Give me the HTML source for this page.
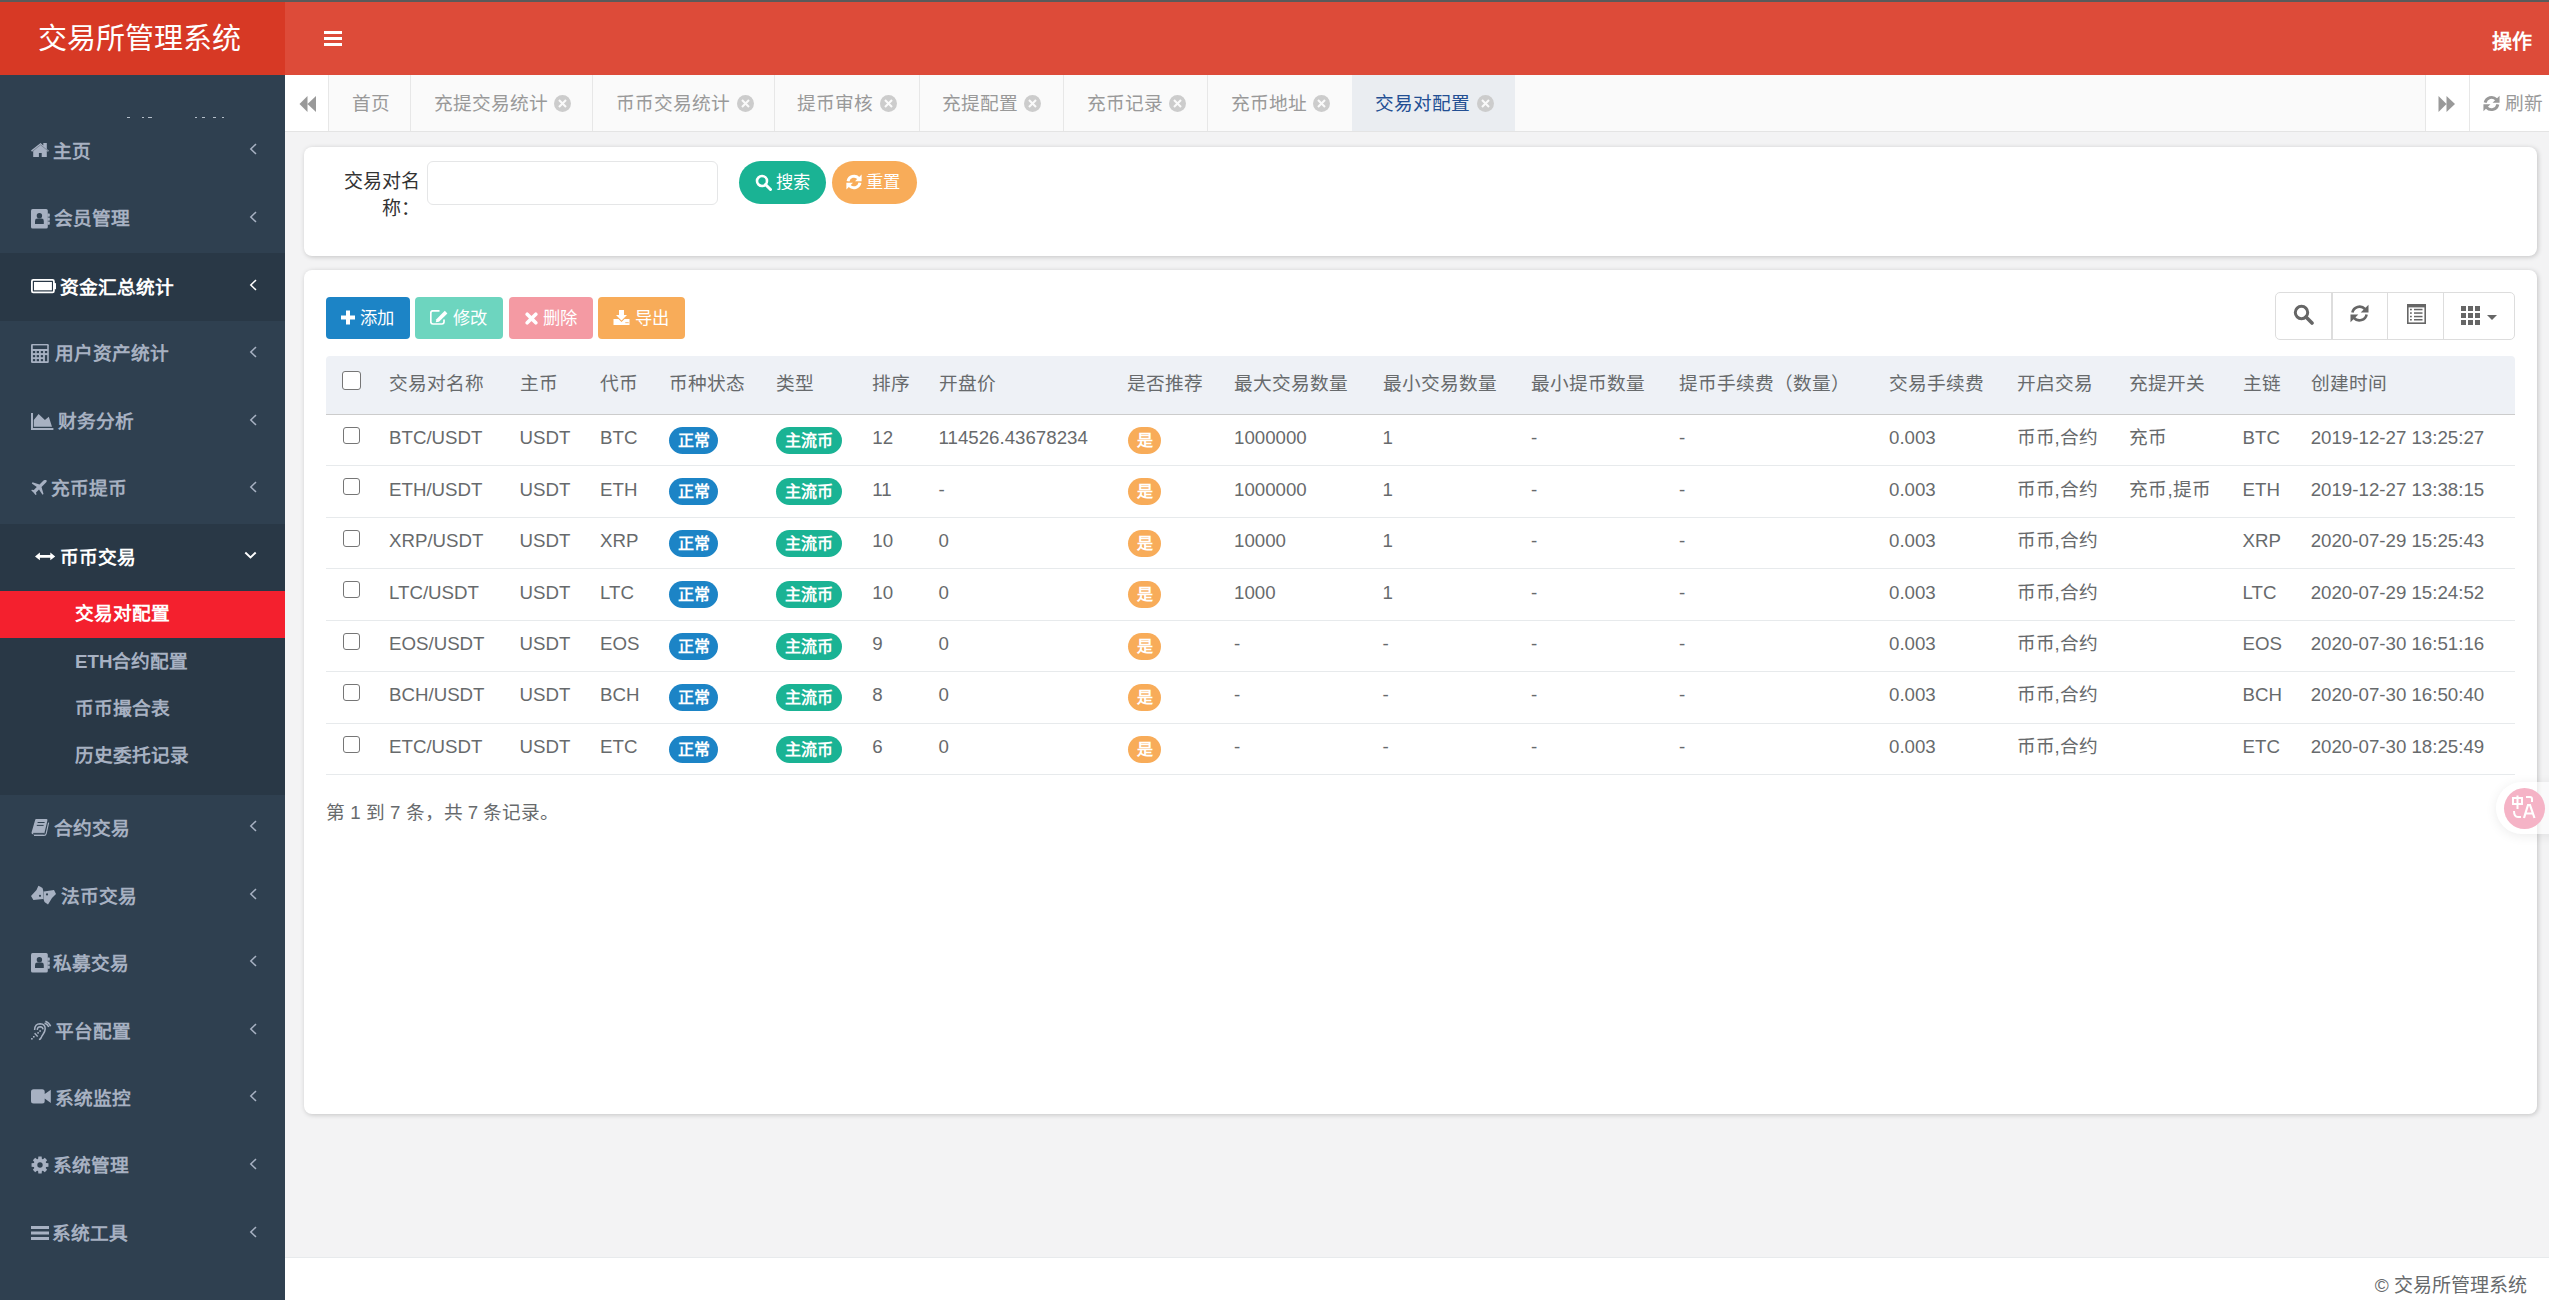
<!DOCTYPE html><html lang="zh-CN"><head><meta charset="utf-8"><style>
*{box-sizing:border-box;margin:0;padding:0}
html,body{width:2549px;height:1300px;overflow:hidden}
body{position:relative;background:#f3f3f4;font-family:"Liberation Sans",sans-serif;color:#676a6c}
.a{position:absolute}
#topline{left:0;top:0;width:2549px;height:2px;background:#5a5a5a}
#logo{left:0;top:2px;width:285px;height:73px;background:#d73925;color:#fff;font-size:29px;line-height:73px;padding-left:38px;padding-top:1px;white-space:nowrap}
#navbar{left:285px;top:2px;width:2264px;height:73px;background:#dd4b39}
#side{left:0;top:75px;width:285px;height:1225px;background:#2f4050;overflow:hidden}
.mi{position:absolute;left:0;width:285px;height:40px;color:#a7b1c2;font-weight:bold;font-size:18.7px;line-height:40px;white-space:nowrap}
.mi .ic{position:absolute;left:31px;top:0;height:40px;display:flex;align-items:center}
.mi .tx{position:absolute;top:0}
.mi .ch{position:absolute;left:249px;top:11.6px}
.mi.w{color:#fff}
.sub{position:absolute;left:75px;height:40px;line-height:40px;color:#a7b1c2;font-weight:bold;font-size:18.7px;white-space:nowrap}
.tabbar{left:285px;top:75px;width:2264px;height:57px;background:#fafafa;border-bottom:1px solid #e4e4e4}
.tab{position:absolute;top:0;height:56px;border-right:1px solid #e7e7e7}
.tt{position:absolute;top:0;line-height:56px;font-size:18.7px;color:#999;white-space:nowrap}
.card{background:#fff;border-radius:8px;box-shadow:1px 1px 5px rgba(0,0,0,.2)}
svg{display:block}
</style></head><body>
<div id="topline" class="a"></div>
<div id="logo" class="a">交易所管理系统</div>
<div id="navbar" class="a"></div>
<svg class="a" style="left:324px;top:31px" width="18" height="16"><rect x="0" y="0" width="18" height="3" fill="#fff"/><rect x="0" y="6" width="18" height="3" fill="#fff"/><rect x="0" y="12" width="18" height="3" fill="#fff"/></svg>
<div class="a" style="left:2492px;top:29px;font-size:20px;font-weight:bold;color:#fff;line-height:26px">操作</div>
<div id="side" class="a">
<div class="a" style="left:0;top:178px;width:285px;height:68px;background:#293846"></div>
<div class="a" style="left:0;top:449px;width:285px;height:271px;background:#293846"></div>
<div class="a" style="left:0;top:516px;width:285px;height:47px;background:#f4202e"></div>
<div class="a" style="left:0;top:42px;width:285px;height:2px">
<div class="a" style="left:127px;top:0;width:3px;height:1px;background:rgba(215,222,232,.8)"></div>
<div class="a" style="left:142px;top:0;width:2px;height:1px;background:rgba(215,222,232,.8)"></div>
<div class="a" style="left:148px;top:0;width:4px;height:1px;background:rgba(215,222,232,.8)"></div>
<div class="a" style="left:195px;top:0;width:2px;height:1px;background:rgba(215,222,232,.8)"></div>
<div class="a" style="left:202px;top:0;width:3px;height:1px;background:rgba(215,222,232,.8)"></div>
<div class="a" style="left:213px;top:0;width:3px;height:1px;background:rgba(215,222,232,.8)"></div>
<div class="a" style="left:222px;top:0;width:2px;height:1px;background:rgba(215,222,232,.8)"></div>
</div>
<div class="mi" style="top:56.9px"><div class="ic" style="left:31px;top:-1.5px"><svg width="19" height="16" viewBox="0 0 19 16"><path d="M9.6 0.9 L0 8.6 L1 9.8 L2.2 8.9 L2.2 15 L7.9 15 L7.9 11 L10.7 11 L10.7 15 L15.8 15 L15.8 8.9 L17 9.8 L18 8.7 L15.8 6.9 L15.8 0.9 L12.3 0.9 L12.3 3.6 Z" fill="#a7b1c2"/><path d="M1.6 9.2 L9.6 2.9 L17.4 9.2" fill="none" stroke="#2f4050" stroke-width="0.7" stroke-opacity="0.55"/></svg></div><div class="tx" style="left:53.3px">主页</div><div class="ch" style=""><svg width="9" height="13" viewBox="0 0 9 13"><path d="M7 1 L1.8 6 L7 11" fill="none" stroke="#a7b1c2" stroke-width="1.5"/></svg></div></div>
<div class="mi" style="top:124.2px"><div class="ic" style="left:31px;top:-0.6px"><svg width="19" height="20" viewBox="0 0 19 20"><rect x="0" y="0.1" width="16.8" height="19.4" rx="1.6" fill="#a7b1c2"/><rect x="16.4" y="4.5" width="2.4" height="3.2" rx="0.6" fill="#a7b1c2"/><rect x="16.4" y="8.5" width="2.4" height="3.2" rx="0.6" fill="#a7b1c2"/><rect x="16.4" y="12.5" width="2.4" height="3.2" rx="0.6" fill="#a7b1c2"/><circle cx="8.4" cy="6.7" r="2.7" fill="#2f4050"/><path d="M4 15.1 L4 11.9 Q4 9.6 6.3 9.6 L10.5 9.6 Q12.8 9.6 12.8 11.9 L12.8 15.1 Z" fill="#2f4050"/></svg></div><div class="tx" style="left:53.6px">会员管理</div><div class="ch" style=""><svg width="9" height="13" viewBox="0 0 9 13"><path d="M7 1 L1.8 6 L7 11" fill="none" stroke="#a7b1c2" stroke-width="1.5"/></svg></div></div>
<div class="mi w" style="top:192.5px"><div class="ic" style="left:31px;top:-1.1px"><svg width="26" height="15" viewBox="0 0 26 15"><rect x="0.9" y="0.9" width="22" height="12.4" rx="1.3" fill="none" stroke="#fff" stroke-width="1.8"/><rect x="3" y="3" width="17.9" height="8.3" fill="#fff"/><rect x="22.8" y="4" width="2.2" height="6.3" rx="0.6" fill="#fff"/></svg></div><div class="tx" style="left:60.0px">资金汇总统计</div><div class="ch" style=""><svg width="9" height="13" viewBox="0 0 9 13"><path d="M7 1 L1.8 6 L7 11" fill="none" stroke="#fff" stroke-width="1.5"/></svg></div></div>
<div class="mi" style="top:259.0px"><div class="ic" style="left:31px;top:-0.5px"><svg width="18" height="19" viewBox="0 0 18 19"><rect x="0" y="0" width="17.8" height="19" rx="1.2" fill="#a7b1c2"/><g fill="#2f4050"><rect x="1.8" y="1.4" width="14.4" height="3.6"/><rect x="1.9" y="7" width="2.3" height="2.1"/><rect x="1.9" y="11.1" width="2.3" height="2.1"/><rect x="1.9" y="15.1" width="2.3" height="2.1"/><rect x="5.7" y="7" width="2.3" height="2.1"/><rect x="5.7" y="11.1" width="2.3" height="2.1"/><rect x="5.7" y="15.1" width="2.3" height="2.1"/><rect x="9.8" y="7" width="2.3" height="2.1"/><rect x="9.8" y="11.1" width="2.3" height="2.1"/><rect x="9.8" y="15.1" width="2.3" height="2.1"/><rect x="13.9" y="7" width="2.3" height="2.1"/><rect x="13.9" y="11.1" width="2.3" height="6.1"/></g></svg></div><div class="tx" style="left:54.8px">用户资产统计</div><div class="ch" style=""><svg width="9" height="13" viewBox="0 0 9 13"><path d="M7 1 L1.8 6 L7 11" fill="none" stroke="#a7b1c2" stroke-width="1.5"/></svg></div></div>
<div class="mi" style="top:327.0px"><div class="ic" style="left:31px;top:-1.5px"><svg width="23" height="18" viewBox="0 0 23 18"><path d="M1 0.9 L1 16.9 L22.4 16.9" fill="none" stroke="#a7b1c2" stroke-width="2"/><path d="M2.8 14.7 L2.8 8 L7.6 2.1 L13.9 8 L17.8 4.8 L21 14.7 Z" fill="#a7b1c2"/></svg></div><div class="tx" style="left:57.5px">财务分析</div><div class="ch" style=""><svg width="9" height="13" viewBox="0 0 9 13"><path d="M7 1 L1.8 6 L7 11" fill="none" stroke="#a7b1c2" stroke-width="1.5"/></svg></div></div>
<div class="mi" style="top:394.0px"><div class="ic" style="left:31px;top:-1px"><svg width="17" height="16" viewBox="0 0 17 16"><path d="M15.5 0.3 Q16.3 1.5 14.5 3 L10.5 7 L12.5 14 L11.5 14.8 L8 9.5 L5 12.5 L5.5 14.5 L4.5 15 L2.5 12.5 L0.3 10.5 L0.8 9.8 L2.8 10 L5.8 7 L0.8 3.5 L1.5 2.3 L8.5 4.5 L12.5 0.5 Q14 -0.5 15.5 0.3 Z" fill="#a7b1c2"/></svg></div><div class="tx" style="left:51.0px">充币提币</div><div class="ch" style=""><svg width="9" height="13" viewBox="0 0 9 13"><path d="M7 1 L1.8 6 L7 11" fill="none" stroke="#a7b1c2" stroke-width="1.5"/></svg></div></div>
<div class="mi w" style="top:463.1px"><div class="ic" style="left:35px;top:-1.6px"><svg width="21" height="9" viewBox="0 0 21 9"><path d="M0 4.4 L4.9 0.5 L4.9 3.1 L15.3 3.1 L15.3 0.5 L20.2 4.4 L15.3 8.3 L15.3 5.7 L4.9 5.7 L4.9 8.3 Z" fill="#fff"/></svg></div><div class="tx" style="left:59.8px">币币交易</div><div class="ch" style="left:244px;top:13px"><svg width="13" height="9" viewBox="0 0 13 9"><path d="M1.3 1.5 L6.5 6.5 L11.7 1.5" fill="none" stroke="#fff" stroke-width="1.9"/></svg></div></div>
<div class="mi" style="top:733.7px"><div class="ic" style="left:28px;top:-3.7px"><svg width="22" height="22" viewBox="0 0 22 22"><path d="M8 5 L18.4 5 Q19.7 5 19.4 6.4 L16.5 18.8 Q16.2 20.3 15 20.3 L5.6 20.3 Q3.2 20.3 3.6 18.3 L7.3 5.6 Q7.5 5 8 5 Z" fill="#a7b1c2"/><path d="M5.2 19.4 L16 19.4" stroke="#2f4050" stroke-width="1"/><path d="M9.6 8.5 L16.6 8.5 M8.8 11.4 L15.6 11.4" stroke="#2f4050" stroke-width="1"/><path d="M20.6 8.6 L18.2 19.6 Q17.8 21.4 16 21.4 L6 21.4" fill="none" stroke="#a7b1c2" stroke-width="1.1"/></svg></div><div class="tx" style="left:54.0px">合约交易</div><div class="ch" style=""><svg width="9" height="13" viewBox="0 0 9 13"><path d="M7 1 L1.8 6 L7 11" fill="none" stroke="#a7b1c2" stroke-width="1.5"/></svg></div></div>
<div class="mi" style="top:801.7px"><div class="ic" style="left:28px;top:-2px"><svg width="30" height="26" viewBox="0 0 30 26"><path d="M3 14 L8.5 8 L10.4 3.8 L12 4.5 L14.5 6 L15.4 9.4 L15.2 17 L5.4 18 Z M15.8 9.4 L26 8 L28 12 L24 16 L20 22.6 L16.5 20 L15.5 17 Z" fill="#a7b1c2"/><circle cx="12" cy="13.8" r="1.1" fill="#2f4050"/><circle cx="19" cy="12.4" r="1.1" fill="#2f4050"/></svg></div><div class="tx" style="left:60.7px">法币交易</div><div class="ch" style=""><svg width="9" height="13" viewBox="0 0 9 13"><path d="M7 1 L1.8 6 L7 11" fill="none" stroke="#a7b1c2" stroke-width="1.5"/></svg></div></div>
<div class="mi" style="top:868.5px"><div class="ic" style="left:31px;top:-0.8px"><svg width="19" height="20" viewBox="0 0 19 20"><rect x="0" y="0.1" width="16.8" height="19.4" rx="1.6" fill="#a7b1c2"/><rect x="16.4" y="4.5" width="2.4" height="3.2" rx="0.6" fill="#a7b1c2"/><rect x="16.4" y="8.5" width="2.4" height="3.2" rx="0.6" fill="#a7b1c2"/><rect x="16.4" y="12.5" width="2.4" height="3.2" rx="0.6" fill="#a7b1c2"/><circle cx="8.4" cy="6.7" r="2.7" fill="#2f4050"/><path d="M4 15.1 L4 11.9 Q4 9.6 6.3 9.6 L10.5 9.6 Q12.8 9.6 12.8 11.9 L12.8 15.1 Z" fill="#2f4050"/></svg></div><div class="tx" style="left:53.2px">私募交易</div><div class="ch" style=""><svg width="9" height="13" viewBox="0 0 9 13"><path d="M7 1 L1.8 6 L7 11" fill="none" stroke="#a7b1c2" stroke-width="1.5"/></svg></div></div>
<div class="mi" style="top:936.5px"><div class="ic" style="left:28px;top:-1.5px"><svg width="28" height="28" viewBox="0 0 28 28"><g fill="none" stroke="#a7b1c2" stroke-width="1.5"><path d="M6.6 13.9 Q6.8 7.8 12.1 7.8 Q17.3 8 17.2 12.9 Q17 15.8 15.1 18.3 Q13.6 20.2 13.2 21.6 Q12.5 23.3 10.9 23.4"/><path d="M9.2 13.9 Q9.4 10.8 12.2 10.8 Q14.9 10.9 15 13.4"/><path d="M6.6 17.3 L9.7 20.5"/><path d="M17.4 5.2 Q21.2 6.6 22.6 10.3"/><path d="M16.6 7 Q19.6 8.2 20.8 11"/></g><g fill="#a7b1c2"><rect x="11.3" y="14.2" width="1.6" height="1.6"/><rect x="9.3" y="16.1" width="1.6" height="1.6"/><rect x="5" y="20" width="1.6" height="1.6"/><rect x="3.1" y="22" width="1.6" height="1.6"/></g></svg></div><div class="tx" style="left:55.2px">平台配置</div><div class="ch" style=""><svg width="9" height="13" viewBox="0 0 9 13"><path d="M7 1 L1.8 6 L7 11" fill="none" stroke="#a7b1c2" stroke-width="1.5"/></svg></div></div>
<div class="mi" style="top:1003.5px"><div class="ic" style="left:31px;top:-2px"><svg width="21" height="15" viewBox="0 0 21 15"><path d="M0 2.7 Q0 0.2 2.5 0.2 L11.2 0.2 Q13.7 0.2 13.7 2.7 L13.7 5 L19.8 0.8 L19.8 14 L13.7 9.5 L13.7 11.9 Q13.7 14.4 11.2 14.4 L2.5 14.4 Q0 14.4 0 11.9 Z" fill="#a7b1c2"/></svg></div><div class="tx" style="left:55.4px">系统监控</div><div class="ch" style=""><svg width="9" height="13" viewBox="0 0 9 13"><path d="M7 1 L1.8 6 L7 11" fill="none" stroke="#a7b1c2" stroke-width="1.5"/></svg></div></div>
<div class="mi" style="top:1071.3px"><div class="ic" style="left:31px;top:-1px"><svg width="18" height="18" viewBox="0 0 18 18"><path d="M7.08 2.90 L7.36 0.56 L10.64 0.56 L10.92 2.90 L11.96 3.32 L13.81 1.87 L16.13 4.19 L14.68 6.04 L15.10 7.08 L17.44 7.36 L17.44 10.64 L15.10 10.92 L14.68 11.96 L16.13 13.81 L13.81 16.13 L11.96 14.68 L10.92 15.10 L10.64 17.44 L7.36 17.44 L7.08 15.10 L6.04 14.68 L4.19 16.13 L1.87 13.81 L3.32 11.96 L2.90 10.92 L0.56 10.64 L0.56 7.36 L2.90 7.08 L3.32 6.04 L1.87 4.19 L4.19 1.87 L6.04 3.32 Z" fill="#a7b1c2"/><circle cx="9" cy="9" r="2.7" fill="#2f4050"/></svg></div><div class="tx" style="left:52.9px">系统管理</div><div class="ch" style=""><svg width="9" height="13" viewBox="0 0 9 13"><path d="M7 1 L1.8 6 L7 11" fill="none" stroke="#a7b1c2" stroke-width="1.5"/></svg></div></div>
<div class="mi" style="top:1139.3px"><div class="ic" style="left:31px;top:-1px"><svg width="18" height="16" viewBox="0 0 18 16"><rect x="0" y="1" width="18" height="3" fill="#a7b1c2"/><rect x="0" y="6.5" width="18" height="3" fill="#a7b1c2"/><rect x="0" y="12" width="18" height="3" fill="#a7b1c2"/></svg></div><div class="tx" style="left:52.2px">系统工具</div><div class="ch" style=""><svg width="9" height="13" viewBox="0 0 9 13"><path d="M7 1 L1.8 6 L7 11" fill="none" stroke="#a7b1c2" stroke-width="1.5"/></svg></div></div>
<div class="sub" style="top:519.2px;color:#fff">交易对配置</div>
<div class="sub" style="top:567.2px;">ETH合约配置</div>
<div class="sub" style="top:614.0px;">币币撮合表</div>
<div class="sub" style="top:661.3px;">历史委托记录</div>
</div>
<div class="a tabbar"></div>
<div class="a" style="left:285px;top:75px;width:44px;height:56px;background:#fff;border-right:1px solid #e7e7e7"></div>
<svg class="a" style="left:299px;top:96px" width="18" height="16" viewBox="0 0 18 16"><path d="M0.5 8 L8.5 0 L8.5 16 Z M8.5 8 L17 0 L17 16 Z" fill="#999"/></svg>
<div class="a" style="left:329px;top:75px;width:82px;height:56px;border-right:1px solid #e7e7e7"></div>
<div class="a tt" style="left:351.5px;top:75.8px;">首页</div>
<div class="a" style="left:411px;top:75px;width:182px;height:56px;border-right:1px solid #e7e7e7"></div>
<div class="a tt" style="left:433.5px;top:75.8px;">充提交易统计</div>
<svg class="a" style="left:554.0px;top:95.0px" width="17" height="17" viewBox="0 0 17 17"><circle cx="8.5" cy="8.5" r="8.5" fill="#ccc"/><path d="M5 5 L12 12 M12 5 L5 12" stroke="#fafafa" stroke-width="2.1"/></svg>
<div class="a" style="left:593px;top:75px;width:182px;height:56px;border-right:1px solid #e7e7e7"></div>
<div class="a tt" style="left:615.5px;top:75.8px;">币币交易统计</div>
<svg class="a" style="left:737.0px;top:95.0px" width="17" height="17" viewBox="0 0 17 17"><circle cx="8.5" cy="8.5" r="8.5" fill="#ccc"/><path d="M5 5 L12 12 M12 5 L5 12" stroke="#fafafa" stroke-width="2.1"/></svg>
<div class="a" style="left:775px;top:75px;width:145px;height:56px;border-right:1px solid #e7e7e7"></div>
<div class="a tt" style="left:797.0px;top:75.8px;">提币审核</div>
<svg class="a" style="left:880.0px;top:95.0px" width="17" height="17" viewBox="0 0 17 17"><circle cx="8.5" cy="8.5" r="8.5" fill="#ccc"/><path d="M5 5 L12 12 M12 5 L5 12" stroke="#fafafa" stroke-width="2.1"/></svg>
<div class="a" style="left:920px;top:75px;width:144px;height:56px;border-right:1px solid #e7e7e7"></div>
<div class="a tt" style="left:941.5px;top:75.8px;">充提配置</div>
<svg class="a" style="left:1024.0px;top:95.0px" width="17" height="17" viewBox="0 0 17 17"><circle cx="8.5" cy="8.5" r="8.5" fill="#ccc"/><path d="M5 5 L12 12 M12 5 L5 12" stroke="#fafafa" stroke-width="2.1"/></svg>
<div class="a" style="left:1064px;top:75px;width:144px;height:56px;border-right:1px solid #e7e7e7"></div>
<div class="a tt" style="left:1086.5px;top:75.8px;">充币记录</div>
<svg class="a" style="left:1169.0px;top:95.0px" width="17" height="17" viewBox="0 0 17 17"><circle cx="8.5" cy="8.5" r="8.5" fill="#ccc"/><path d="M5 5 L12 12 M12 5 L5 12" stroke="#fafafa" stroke-width="2.1"/></svg>
<div class="a" style="left:1208px;top:75px;width:145px;height:56px;border-right:1px solid #e7e7e7"></div>
<div class="a tt" style="left:1230.5px;top:75.8px;">充币地址</div>
<svg class="a" style="left:1313.0px;top:95.0px" width="17" height="17" viewBox="0 0 17 17"><circle cx="8.5" cy="8.5" r="8.5" fill="#ccc"/><path d="M5 5 L12 12 M12 5 L5 12" stroke="#fafafa" stroke-width="2.1"/></svg>
<div class="a" style="left:1352px;top:75px;width:163px;height:56px;background:#eaedf1"></div>
<div class="a tt" style="left:1374.5px;top:75.8px;color:#234f93">交易对配置</div>
<svg class="a" style="left:1477.0px;top:95.0px" width="17" height="17" viewBox="0 0 17 17"><circle cx="8.5" cy="8.5" r="8.5" fill="#ccc"/><path d="M5 5 L12 12 M12 5 L5 12" stroke="#fafafa" stroke-width="2.1"/></svg>
<div class="a" style="left:2425px;top:75px;width:124px;height:56px;background:#fff;border-left:1px solid #e7e7e7"></div>
<div class="a" style="left:2469px;top:75px;width:1px;height:56px;background:#e7e7e7"></div>
<svg class="a" style="left:2438px;top:96px" width="18" height="16" viewBox="0 0 18 16"><path d="M0.5 0 L8.5 8 L0.5 16 Z M8.5 0 L17 8 L8.5 16 Z" fill="#999"/></svg>
<div class="a" style="left:2483px;top:95px"><svg width="17" height="17" viewBox="0 0 16 16"><path d="M2 7.2 A6.2 6.2 0 0 1 12.6 4.2" fill="none" stroke="#999" stroke-width="2.7"/><path d="M15.6 0.6 L15.6 7.2 L9 7.2 Z" fill="#999"/><path d="M14 8.8 A6.2 6.2 0 0 1 3.4 11.8" fill="none" stroke="#999" stroke-width="2.7"/><path d="M0.4 15.4 L0.4 8.8 L7 8.8 Z" fill="#999"/></svg></div>
<div class="a tt" style="left:2505px;top:75.8px">刷新</div>
<div class="a card" style="left:304px;top:147px;width:2233px;height:109px"></div>
<div class="a" style="left:330px;top:167.5px;width:90px;text-align:right;font-size:19px;line-height:27px;color:#333">交易对名称：</div>
<div class="a" style="left:427px;top:161px;width:291px;height:44px;border:1px solid #e5e6e7;border-radius:6px;background:#fff"></div>
<div class="a" style="left:739px;top:161px;width:87px;height:43px;border-radius:22px;background:#1ab394"></div>
<div class="a" style="left:755px;top:174px"><svg width="17" height="17" viewBox="0 0 17 17"><circle cx="7" cy="7" r="5" fill="none" stroke="#fff" stroke-width="2.6"/><path d="M10.5 10.5 L15.5 15.5" stroke="#fff" stroke-width="3" stroke-linecap="round"/></svg></div>
<div class="a" style="left:776px;top:161px;line-height:43px;font-size:17.3px;color:#fff">搜索</div>
<div class="a" style="left:832px;top:161px;width:85px;height:43px;border-radius:22px;background:#f8ac59"></div>
<div class="a" style="left:846px;top:174px"><svg width="16" height="16" viewBox="0 0 16 16"><path d="M2 7.2 A6.2 6.2 0 0 1 12.6 4.2" fill="none" stroke="#fff" stroke-width="2.9"/><path d="M15.6 0.6 L15.6 7.2 L9 7.2 Z" fill="#fff"/><path d="M14 8.8 A6.2 6.2 0 0 1 3.4 11.8" fill="none" stroke="#fff" stroke-width="2.9"/><path d="M0.4 15.4 L0.4 8.8 L7 8.8 Z" fill="#fff"/></svg></div>
<div class="a" style="left:866px;top:161px;line-height:43px;font-size:17.3px;color:#fff">重置</div>
<div class="a card" style="left:304px;top:270px;width:2233px;height:844px"></div>
<div class="a" style="left:326px;top:297px;width:84px;height:42px;border-radius:4px;background:#1c84c6"></div>
<div class="a" style="left:340.5px;top:310px"><svg width="14" height="15" viewBox="0 0 14 15"><path d="M5 0.5 L9 0.5 L9 5.5 L14 5.5 L14 9.5 L9 9.5 L9 14.5 L5 14.5 L5 9.5 L0 9.5 L0 5.5 L5 5.5 Z" fill="#fff"/></svg></div>
<div class="a" style="left:360.0px;top:297px;line-height:42px;font-size:17.3px;color:#fff;white-space:nowrap">添加</div>
<div class="a" style="left:415px;top:297px;width:88px;height:42px;border-radius:4px;background:#6dd5bf"></div>
<div class="a" style="left:430.0px;top:310px"><svg width="18" height="15" viewBox="0 0 18 15"><path d="M9.5 0.8 L3 0.8 Q0.8 0.8 0.8 3 L0.8 11.8 Q0.8 14 3 14 L11.8 14 Q14 14 14 11.8 L14 9.5" fill="none" stroke="#fff" stroke-width="1.7"/><path d="M5.8 12.3 L6.4 9.2 L14.8 0.8 L17.4 3.4 L9 11.8 Z" fill="#fff"/></svg></div>
<div class="a" style="left:452.5px;top:297px;line-height:42px;font-size:17.3px;color:#fff;white-space:nowrap">修改</div>
<div class="a" style="left:509px;top:297px;width:84px;height:42px;border-radius:4px;background:#f49aa3"></div>
<div class="a" style="left:524.5px;top:312px"><svg width="13" height="13" viewBox="0 0 13 13"><path d="M2.2 2.2 L10.8 10.8 M10.8 2.2 L2.2 10.8" stroke="#fff" stroke-width="3.6" stroke-linecap="round"/></svg></div>
<div class="a" style="left:542.5px;top:297px;line-height:42px;font-size:17.3px;color:#fff;white-space:nowrap">删除</div>
<div class="a" style="left:598px;top:297px;width:87px;height:42px;border-radius:4px;background:#f8ac59"></div>
<div class="a" style="left:613.0px;top:310px"><svg width="17" height="15" viewBox="0 0 17 15"><path d="M6 0 L11 0 L11 5 L14 5 L8.5 10.5 L3 5 L6 5 Z" fill="#fff"/><path d="M0.5 9 L5.5 9 L8.5 12 L11.5 9 L16.5 9 L16.5 15 L0.5 15 Z" fill="#fff"/><rect x="12.5" y="12" width="1.2" height="1.2" fill="#f8ac59"/><rect x="14.3" y="12" width="1.2" height="1.2" fill="#f8ac59"/></svg></div>
<div class="a" style="left:635.0px;top:297px;line-height:42px;font-size:17.3px;color:#fff;white-space:nowrap">导出</div>
<div class="a" style="left:2275px;top:292px;width:240px;height:48px;border:1px solid #ddd;border-radius:5px;background:#fff"></div>
<div class="a" style="left:2331px;top:293px;width:2px;height:46px;background:#ddd"></div>
<div class="a" style="left:2387px;top:293px;width:1px;height:46px;background:#ddd"></div>
<div class="a" style="left:2443px;top:293px;width:1px;height:46px;background:#ddd"></div>
<div class="a" style="left:2293px;top:304px"><svg width="21" height="21" viewBox="0 0 21 21"><circle cx="8.5" cy="8.5" r="6.2" fill="none" stroke="#666" stroke-width="3"/><path d="M13 13 L19 19" stroke="#666" stroke-width="3.6" stroke-linecap="round"/></svg></div>
<div class="a" style="left:2350px;top:304px"><svg width="19" height="19" viewBox="0 0 16 16"><path d="M2 7.2 A6.2 6.2 0 0 1 12.6 4.2" fill="none" stroke="#666" stroke-width="2.2"/><path d="M15.6 0.6 L15.6 7.2 L9 7.2 Z" fill="#666"/><path d="M14 8.8 A6.2 6.2 0 0 1 3.4 11.8" fill="none" stroke="#666" stroke-width="2.2"/><path d="M0.4 15.4 L0.4 8.8 L7 8.8 Z" fill="#666"/></svg></div>
<div class="a" style="left:2407px;top:304px"><svg width="19" height="20" viewBox="0 0 19 20"><rect x="0.8" y="0.8" width="17.4" height="18.4" fill="none" stroke="#666" stroke-width="1.6"/><rect x="0.8" y="0.8" width="17.4" height="2.6" fill="#666"/><g fill="#666"><rect x="3" y="4.8" width="1.8" height="1.5"/><rect x="7" y="4.8" width="8.5" height="1.5"/><rect x="3" y="8.3" width="1.8" height="1.5"/><rect x="7" y="8.3" width="8.5" height="1.5"/><rect x="3" y="11.8" width="1.8" height="1.5"/><rect x="7" y="11.8" width="8.5" height="1.5"/><rect x="3" y="15" width="1.8" height="1.5"/><rect x="7" y="15" width="8.5" height="1.5"/></g></svg></div>
<div class="a" style="left:2461px;top:306px"><svg width="19" height="19" viewBox="0 0 19 19"><g fill="#666"><rect x="0" y="0" width="5" height="5"/><rect x="7" y="0" width="5" height="5"/><rect x="14" y="0" width="5" height="5"/><rect x="0" y="7" width="5" height="5"/><rect x="7" y="7" width="5" height="5"/><rect x="14" y="7" width="5" height="5"/><rect x="0" y="14" width="5" height="5"/><rect x="7" y="14" width="5" height="5"/><rect x="14" y="14" width="5" height="5"/></g></svg></div>
<div class="a" style="left:2487px;top:315px"><svg width="10" height="6" viewBox="0 0 10 6"><path d="M0 0 L10 0 L5 5 Z" fill="#666"/></svg></div>
<div class="a" style="left:326px;top:356px;width:2189px;height:59px;background:#eef1f6;border-radius:4px 4px 0 0;border-bottom:1px solid #ccc"></div>
<div class="a" style="left:342px;top:371px;width:19px;height:19px;border:1px solid #767676;border-radius:3px;background:#fff"></div>
<div class="a" style="left:389.0px;top:368.5px;line-height:30px;font-size:18.7px;color:#676a6c;white-space:nowrap">交易对名称</div>
<div class="a" style="left:519.5px;top:368.5px;line-height:30px;font-size:18.7px;color:#676a6c;white-space:nowrap">主币</div>
<div class="a" style="left:600.0px;top:368.5px;line-height:30px;font-size:18.7px;color:#676a6c;white-space:nowrap">代币</div>
<div class="a" style="left:669.3px;top:368.5px;line-height:30px;font-size:18.7px;color:#676a6c;white-space:nowrap">币种状态</div>
<div class="a" style="left:776.0px;top:368.5px;line-height:30px;font-size:18.7px;color:#676a6c;white-space:nowrap">类型</div>
<div class="a" style="left:872.3px;top:368.5px;line-height:30px;font-size:18.7px;color:#676a6c;white-space:nowrap">排序</div>
<div class="a" style="left:938.5px;top:368.5px;line-height:30px;font-size:18.7px;color:#676a6c;white-space:nowrap">开盘价</div>
<div class="a" style="left:1127.4px;top:368.5px;line-height:30px;font-size:18.7px;color:#676a6c;white-space:nowrap">是否推荐</div>
<div class="a" style="left:1234.0px;top:368.5px;line-height:30px;font-size:18.7px;color:#676a6c;white-space:nowrap">最大交易数量</div>
<div class="a" style="left:1382.5px;top:368.5px;line-height:30px;font-size:18.7px;color:#676a6c;white-space:nowrap">最小交易数量</div>
<div class="a" style="left:1531.0px;top:368.5px;line-height:30px;font-size:18.7px;color:#676a6c;white-space:nowrap">最小提币数量</div>
<div class="a" style="left:1679.0px;top:368.5px;line-height:30px;font-size:18.7px;color:#676a6c;white-space:nowrap">提币手续费（数量）</div>
<div class="a" style="left:1889.0px;top:368.5px;line-height:30px;font-size:18.7px;color:#676a6c;white-space:nowrap">交易手续费</div>
<div class="a" style="left:2016.5px;top:368.5px;line-height:30px;font-size:18.7px;color:#676a6c;white-space:nowrap">开启交易</div>
<div class="a" style="left:2129.4px;top:368.5px;line-height:30px;font-size:18.7px;color:#676a6c;white-space:nowrap">充提开关</div>
<div class="a" style="left:2242.6px;top:368.5px;line-height:30px;font-size:18.7px;color:#676a6c;white-space:nowrap">主链</div>
<div class="a" style="left:2310.7px;top:368.5px;line-height:30px;font-size:18.7px;color:#676a6c;white-space:nowrap">创建时间</div>
<div class="a" style="left:343px;top:427px;width:17px;height:17px;border:1px solid #767676;border-radius:3px;background:#fff"></div>
<div class="a" style="left:389.0px;top:422.7px;line-height:30px;font-size:18.7px;color:#676a6c;white-space:nowrap">BTC/USDT</div>
<div class="a" style="left:519.5px;top:422.7px;line-height:30px;font-size:18.7px;color:#676a6c;white-space:nowrap">USDT</div>
<div class="a" style="left:600.0px;top:422.7px;line-height:30px;font-size:18.7px;color:#676a6c;white-space:nowrap">BTC</div>
<div class="a" style="left:872.3px;top:422.7px;line-height:30px;font-size:18.7px;color:#676a6c;white-space:nowrap">12</div>
<div class="a" style="left:938.5px;top:422.7px;line-height:30px;font-size:18.7px;color:#676a6c;white-space:nowrap">114526.43678234</div>
<div class="a" style="left:1234.0px;top:422.7px;line-height:30px;font-size:18.7px;color:#676a6c;white-space:nowrap">1000000</div>
<div class="a" style="left:1382.5px;top:422.7px;line-height:30px;font-size:18.7px;color:#676a6c;white-space:nowrap">1</div>
<div class="a" style="left:1531.0px;top:422.7px;line-height:30px;font-size:18.7px;color:#676a6c;white-space:nowrap">-</div>
<div class="a" style="left:1679.0px;top:422.7px;line-height:30px;font-size:18.7px;color:#676a6c;white-space:nowrap">-</div>
<div class="a" style="left:1889.0px;top:422.7px;line-height:30px;font-size:18.7px;color:#676a6c;white-space:nowrap">0.003</div>
<div class="a" style="left:2016.5px;top:422.7px;line-height:30px;font-size:18.7px;color:#676a6c;white-space:nowrap">币币,合约</div>
<div class="a" style="left:2129.4px;top:422.7px;line-height:30px;font-size:18.7px;color:#676a6c;white-space:nowrap">充币</div>
<div class="a" style="left:2242.6px;top:422.7px;line-height:30px;font-size:18.7px;color:#676a6c;white-space:nowrap">BTC</div>
<div class="a" style="left:2310.7px;top:422.7px;line-height:30px;font-size:18.7px;color:#676a6c;white-space:nowrap">2019-12-27 13:25:27</div>
<div class="a" style="left:669px;top:427px;width:49px;height:27px;border-radius:14px;background:#1c84c6;color:#fff;font-weight:bold;font-size:16px;line-height:27px;text-align:center;white-space:nowrap">正常</div>
<div class="a" style="left:776px;top:427px;width:66px;height:27px;border-radius:14px;background:#1ab394;color:#fff;font-weight:bold;font-size:16px;line-height:27px;text-align:center;white-space:nowrap">主流币</div>
<div class="a" style="left:1128px;top:427px;width:33px;height:27px;border-radius:14px;background:#f8ac59;color:#fff;font-weight:bold;font-size:16px;line-height:27px;text-align:center;white-space:nowrap">是</div>
<div class="a" style="left:326px;top:465px;width:2189px;height:1px;background:#e7eaec"></div>
<div class="a" style="left:343px;top:478px;width:17px;height:17px;border:1px solid #767676;border-radius:3px;background:#fff"></div>
<div class="a" style="left:389.0px;top:475.2px;line-height:30px;font-size:18.7px;color:#676a6c;white-space:nowrap">ETH/USDT</div>
<div class="a" style="left:519.5px;top:475.2px;line-height:30px;font-size:18.7px;color:#676a6c;white-space:nowrap">USDT</div>
<div class="a" style="left:600.0px;top:475.2px;line-height:30px;font-size:18.7px;color:#676a6c;white-space:nowrap">ETH</div>
<div class="a" style="left:872.3px;top:475.2px;line-height:30px;font-size:18.7px;color:#676a6c;white-space:nowrap">11</div>
<div class="a" style="left:938.5px;top:475.2px;line-height:30px;font-size:18.7px;color:#676a6c;white-space:nowrap">-</div>
<div class="a" style="left:1234.0px;top:475.2px;line-height:30px;font-size:18.7px;color:#676a6c;white-space:nowrap">1000000</div>
<div class="a" style="left:1382.5px;top:475.2px;line-height:30px;font-size:18.7px;color:#676a6c;white-space:nowrap">1</div>
<div class="a" style="left:1531.0px;top:475.2px;line-height:30px;font-size:18.7px;color:#676a6c;white-space:nowrap">-</div>
<div class="a" style="left:1679.0px;top:475.2px;line-height:30px;font-size:18.7px;color:#676a6c;white-space:nowrap">-</div>
<div class="a" style="left:1889.0px;top:475.2px;line-height:30px;font-size:18.7px;color:#676a6c;white-space:nowrap">0.003</div>
<div class="a" style="left:2016.5px;top:475.2px;line-height:30px;font-size:18.7px;color:#676a6c;white-space:nowrap">币币,合约</div>
<div class="a" style="left:2129.4px;top:475.2px;line-height:30px;font-size:18.7px;color:#676a6c;white-space:nowrap">充币,提币</div>
<div class="a" style="left:2242.6px;top:475.2px;line-height:30px;font-size:18.7px;color:#676a6c;white-space:nowrap">ETH</div>
<div class="a" style="left:2310.7px;top:475.2px;line-height:30px;font-size:18.7px;color:#676a6c;white-space:nowrap">2019-12-27 13:38:15</div>
<div class="a" style="left:669px;top:478px;width:49px;height:27px;border-radius:14px;background:#1c84c6;color:#fff;font-weight:bold;font-size:16px;line-height:27px;text-align:center;white-space:nowrap">正常</div>
<div class="a" style="left:776px;top:478px;width:66px;height:27px;border-radius:14px;background:#1ab394;color:#fff;font-weight:bold;font-size:16px;line-height:27px;text-align:center;white-space:nowrap">主流币</div>
<div class="a" style="left:1128px;top:478px;width:33px;height:27px;border-radius:14px;background:#f8ac59;color:#fff;font-weight:bold;font-size:16px;line-height:27px;text-align:center;white-space:nowrap">是</div>
<div class="a" style="left:326px;top:517px;width:2189px;height:1px;background:#e7eaec"></div>
<div class="a" style="left:343px;top:530px;width:17px;height:17px;border:1px solid #767676;border-radius:3px;background:#fff"></div>
<div class="a" style="left:389.0px;top:525.7px;line-height:30px;font-size:18.7px;color:#676a6c;white-space:nowrap">XRP/USDT</div>
<div class="a" style="left:519.5px;top:525.7px;line-height:30px;font-size:18.7px;color:#676a6c;white-space:nowrap">USDT</div>
<div class="a" style="left:600.0px;top:525.7px;line-height:30px;font-size:18.7px;color:#676a6c;white-space:nowrap">XRP</div>
<div class="a" style="left:872.3px;top:525.7px;line-height:30px;font-size:18.7px;color:#676a6c;white-space:nowrap">10</div>
<div class="a" style="left:938.5px;top:525.7px;line-height:30px;font-size:18.7px;color:#676a6c;white-space:nowrap">0</div>
<div class="a" style="left:1234.0px;top:525.7px;line-height:30px;font-size:18.7px;color:#676a6c;white-space:nowrap">10000</div>
<div class="a" style="left:1382.5px;top:525.7px;line-height:30px;font-size:18.7px;color:#676a6c;white-space:nowrap">1</div>
<div class="a" style="left:1531.0px;top:525.7px;line-height:30px;font-size:18.7px;color:#676a6c;white-space:nowrap">-</div>
<div class="a" style="left:1679.0px;top:525.7px;line-height:30px;font-size:18.7px;color:#676a6c;white-space:nowrap">-</div>
<div class="a" style="left:1889.0px;top:525.7px;line-height:30px;font-size:18.7px;color:#676a6c;white-space:nowrap">0.003</div>
<div class="a" style="left:2016.5px;top:525.7px;line-height:30px;font-size:18.7px;color:#676a6c;white-space:nowrap">币币,合约</div>
<div class="a" style="left:2242.6px;top:525.7px;line-height:30px;font-size:18.7px;color:#676a6c;white-space:nowrap">XRP</div>
<div class="a" style="left:2310.7px;top:525.7px;line-height:30px;font-size:18.7px;color:#676a6c;white-space:nowrap">2020-07-29 15:25:43</div>
<div class="a" style="left:669px;top:530px;width:49px;height:27px;border-radius:14px;background:#1c84c6;color:#fff;font-weight:bold;font-size:16px;line-height:27px;text-align:center;white-space:nowrap">正常</div>
<div class="a" style="left:776px;top:530px;width:66px;height:27px;border-radius:14px;background:#1ab394;color:#fff;font-weight:bold;font-size:16px;line-height:27px;text-align:center;white-space:nowrap">主流币</div>
<div class="a" style="left:1128px;top:530px;width:33px;height:27px;border-radius:14px;background:#f8ac59;color:#fff;font-weight:bold;font-size:16px;line-height:27px;text-align:center;white-space:nowrap">是</div>
<div class="a" style="left:326px;top:568px;width:2189px;height:1px;background:#e7eaec"></div>
<div class="a" style="left:343px;top:581px;width:17px;height:17px;border:1px solid #767676;border-radius:3px;background:#fff"></div>
<div class="a" style="left:389.0px;top:578.2px;line-height:30px;font-size:18.7px;color:#676a6c;white-space:nowrap">LTC/USDT</div>
<div class="a" style="left:519.5px;top:578.2px;line-height:30px;font-size:18.7px;color:#676a6c;white-space:nowrap">USDT</div>
<div class="a" style="left:600.0px;top:578.2px;line-height:30px;font-size:18.7px;color:#676a6c;white-space:nowrap">LTC</div>
<div class="a" style="left:872.3px;top:578.2px;line-height:30px;font-size:18.7px;color:#676a6c;white-space:nowrap">10</div>
<div class="a" style="left:938.5px;top:578.2px;line-height:30px;font-size:18.7px;color:#676a6c;white-space:nowrap">0</div>
<div class="a" style="left:1234.0px;top:578.2px;line-height:30px;font-size:18.7px;color:#676a6c;white-space:nowrap">1000</div>
<div class="a" style="left:1382.5px;top:578.2px;line-height:30px;font-size:18.7px;color:#676a6c;white-space:nowrap">1</div>
<div class="a" style="left:1531.0px;top:578.2px;line-height:30px;font-size:18.7px;color:#676a6c;white-space:nowrap">-</div>
<div class="a" style="left:1679.0px;top:578.2px;line-height:30px;font-size:18.7px;color:#676a6c;white-space:nowrap">-</div>
<div class="a" style="left:1889.0px;top:578.2px;line-height:30px;font-size:18.7px;color:#676a6c;white-space:nowrap">0.003</div>
<div class="a" style="left:2016.5px;top:578.2px;line-height:30px;font-size:18.7px;color:#676a6c;white-space:nowrap">币币,合约</div>
<div class="a" style="left:2242.6px;top:578.2px;line-height:30px;font-size:18.7px;color:#676a6c;white-space:nowrap">LTC</div>
<div class="a" style="left:2310.7px;top:578.2px;line-height:30px;font-size:18.7px;color:#676a6c;white-space:nowrap">2020-07-29 15:24:52</div>
<div class="a" style="left:669px;top:581px;width:49px;height:27px;border-radius:14px;background:#1c84c6;color:#fff;font-weight:bold;font-size:16px;line-height:27px;text-align:center;white-space:nowrap">正常</div>
<div class="a" style="left:776px;top:581px;width:66px;height:27px;border-radius:14px;background:#1ab394;color:#fff;font-weight:bold;font-size:16px;line-height:27px;text-align:center;white-space:nowrap">主流币</div>
<div class="a" style="left:1128px;top:581px;width:33px;height:27px;border-radius:14px;background:#f8ac59;color:#fff;font-weight:bold;font-size:16px;line-height:27px;text-align:center;white-space:nowrap">是</div>
<div class="a" style="left:326px;top:620px;width:2189px;height:1px;background:#e7eaec"></div>
<div class="a" style="left:343px;top:633px;width:17px;height:17px;border:1px solid #767676;border-radius:3px;background:#fff"></div>
<div class="a" style="left:389.0px;top:628.7px;line-height:30px;font-size:18.7px;color:#676a6c;white-space:nowrap">EOS/USDT</div>
<div class="a" style="left:519.5px;top:628.7px;line-height:30px;font-size:18.7px;color:#676a6c;white-space:nowrap">USDT</div>
<div class="a" style="left:600.0px;top:628.7px;line-height:30px;font-size:18.7px;color:#676a6c;white-space:nowrap">EOS</div>
<div class="a" style="left:872.3px;top:628.7px;line-height:30px;font-size:18.7px;color:#676a6c;white-space:nowrap">9</div>
<div class="a" style="left:938.5px;top:628.7px;line-height:30px;font-size:18.7px;color:#676a6c;white-space:nowrap">0</div>
<div class="a" style="left:1234.0px;top:628.7px;line-height:30px;font-size:18.7px;color:#676a6c;white-space:nowrap">-</div>
<div class="a" style="left:1382.5px;top:628.7px;line-height:30px;font-size:18.7px;color:#676a6c;white-space:nowrap">-</div>
<div class="a" style="left:1531.0px;top:628.7px;line-height:30px;font-size:18.7px;color:#676a6c;white-space:nowrap">-</div>
<div class="a" style="left:1679.0px;top:628.7px;line-height:30px;font-size:18.7px;color:#676a6c;white-space:nowrap">-</div>
<div class="a" style="left:1889.0px;top:628.7px;line-height:30px;font-size:18.7px;color:#676a6c;white-space:nowrap">0.003</div>
<div class="a" style="left:2016.5px;top:628.7px;line-height:30px;font-size:18.7px;color:#676a6c;white-space:nowrap">币币,合约</div>
<div class="a" style="left:2242.6px;top:628.7px;line-height:30px;font-size:18.7px;color:#676a6c;white-space:nowrap">EOS</div>
<div class="a" style="left:2310.7px;top:628.7px;line-height:30px;font-size:18.7px;color:#676a6c;white-space:nowrap">2020-07-30 16:51:16</div>
<div class="a" style="left:669px;top:633px;width:49px;height:27px;border-radius:14px;background:#1c84c6;color:#fff;font-weight:bold;font-size:16px;line-height:27px;text-align:center;white-space:nowrap">正常</div>
<div class="a" style="left:776px;top:633px;width:66px;height:27px;border-radius:14px;background:#1ab394;color:#fff;font-weight:bold;font-size:16px;line-height:27px;text-align:center;white-space:nowrap">主流币</div>
<div class="a" style="left:1128px;top:633px;width:33px;height:27px;border-radius:14px;background:#f8ac59;color:#fff;font-weight:bold;font-size:16px;line-height:27px;text-align:center;white-space:nowrap">是</div>
<div class="a" style="left:326px;top:671px;width:2189px;height:1px;background:#e7eaec"></div>
<div class="a" style="left:343px;top:684px;width:17px;height:17px;border:1px solid #767676;border-radius:3px;background:#fff"></div>
<div class="a" style="left:389.0px;top:680.2px;line-height:30px;font-size:18.7px;color:#676a6c;white-space:nowrap">BCH/USDT</div>
<div class="a" style="left:519.5px;top:680.2px;line-height:30px;font-size:18.7px;color:#676a6c;white-space:nowrap">USDT</div>
<div class="a" style="left:600.0px;top:680.2px;line-height:30px;font-size:18.7px;color:#676a6c;white-space:nowrap">BCH</div>
<div class="a" style="left:872.3px;top:680.2px;line-height:30px;font-size:18.7px;color:#676a6c;white-space:nowrap">8</div>
<div class="a" style="left:938.5px;top:680.2px;line-height:30px;font-size:18.7px;color:#676a6c;white-space:nowrap">0</div>
<div class="a" style="left:1234.0px;top:680.2px;line-height:30px;font-size:18.7px;color:#676a6c;white-space:nowrap">-</div>
<div class="a" style="left:1382.5px;top:680.2px;line-height:30px;font-size:18.7px;color:#676a6c;white-space:nowrap">-</div>
<div class="a" style="left:1531.0px;top:680.2px;line-height:30px;font-size:18.7px;color:#676a6c;white-space:nowrap">-</div>
<div class="a" style="left:1679.0px;top:680.2px;line-height:30px;font-size:18.7px;color:#676a6c;white-space:nowrap">-</div>
<div class="a" style="left:1889.0px;top:680.2px;line-height:30px;font-size:18.7px;color:#676a6c;white-space:nowrap">0.003</div>
<div class="a" style="left:2016.5px;top:680.2px;line-height:30px;font-size:18.7px;color:#676a6c;white-space:nowrap">币币,合约</div>
<div class="a" style="left:2242.6px;top:680.2px;line-height:30px;font-size:18.7px;color:#676a6c;white-space:nowrap">BCH</div>
<div class="a" style="left:2310.7px;top:680.2px;line-height:30px;font-size:18.7px;color:#676a6c;white-space:nowrap">2020-07-30 16:50:40</div>
<div class="a" style="left:669px;top:684px;width:49px;height:27px;border-radius:14px;background:#1c84c6;color:#fff;font-weight:bold;font-size:16px;line-height:27px;text-align:center;white-space:nowrap">正常</div>
<div class="a" style="left:776px;top:684px;width:66px;height:27px;border-radius:14px;background:#1ab394;color:#fff;font-weight:bold;font-size:16px;line-height:27px;text-align:center;white-space:nowrap">主流币</div>
<div class="a" style="left:1128px;top:684px;width:33px;height:27px;border-radius:14px;background:#f8ac59;color:#fff;font-weight:bold;font-size:16px;line-height:27px;text-align:center;white-space:nowrap">是</div>
<div class="a" style="left:326px;top:723px;width:2189px;height:1px;background:#e7eaec"></div>
<div class="a" style="left:343px;top:736px;width:17px;height:17px;border:1px solid #767676;border-radius:3px;background:#fff"></div>
<div class="a" style="left:389.0px;top:731.7px;line-height:30px;font-size:18.7px;color:#676a6c;white-space:nowrap">ETC/USDT</div>
<div class="a" style="left:519.5px;top:731.7px;line-height:30px;font-size:18.7px;color:#676a6c;white-space:nowrap">USDT</div>
<div class="a" style="left:600.0px;top:731.7px;line-height:30px;font-size:18.7px;color:#676a6c;white-space:nowrap">ETC</div>
<div class="a" style="left:872.3px;top:731.7px;line-height:30px;font-size:18.7px;color:#676a6c;white-space:nowrap">6</div>
<div class="a" style="left:938.5px;top:731.7px;line-height:30px;font-size:18.7px;color:#676a6c;white-space:nowrap">0</div>
<div class="a" style="left:1234.0px;top:731.7px;line-height:30px;font-size:18.7px;color:#676a6c;white-space:nowrap">-</div>
<div class="a" style="left:1382.5px;top:731.7px;line-height:30px;font-size:18.7px;color:#676a6c;white-space:nowrap">-</div>
<div class="a" style="left:1531.0px;top:731.7px;line-height:30px;font-size:18.7px;color:#676a6c;white-space:nowrap">-</div>
<div class="a" style="left:1679.0px;top:731.7px;line-height:30px;font-size:18.7px;color:#676a6c;white-space:nowrap">-</div>
<div class="a" style="left:1889.0px;top:731.7px;line-height:30px;font-size:18.7px;color:#676a6c;white-space:nowrap">0.003</div>
<div class="a" style="left:2016.5px;top:731.7px;line-height:30px;font-size:18.7px;color:#676a6c;white-space:nowrap">币币,合约</div>
<div class="a" style="left:2242.6px;top:731.7px;line-height:30px;font-size:18.7px;color:#676a6c;white-space:nowrap">ETC</div>
<div class="a" style="left:2310.7px;top:731.7px;line-height:30px;font-size:18.7px;color:#676a6c;white-space:nowrap">2020-07-30 18:25:49</div>
<div class="a" style="left:669px;top:736px;width:49px;height:27px;border-radius:14px;background:#1c84c6;color:#fff;font-weight:bold;font-size:16px;line-height:27px;text-align:center;white-space:nowrap">正常</div>
<div class="a" style="left:776px;top:736px;width:66px;height:27px;border-radius:14px;background:#1ab394;color:#fff;font-weight:bold;font-size:16px;line-height:27px;text-align:center;white-space:nowrap">主流币</div>
<div class="a" style="left:1128px;top:736px;width:33px;height:27px;border-radius:14px;background:#f8ac59;color:#fff;font-weight:bold;font-size:16px;line-height:27px;text-align:center;white-space:nowrap">是</div>
<div class="a" style="left:326px;top:774px;width:2189px;height:1px;background:#e7eaec"></div>
<div class="a" style="left:326.0px;top:798.0px;line-height:30px;font-size:18.7px;color:#676a6c;white-space:nowrap">第 1 到 7 条，共 7 条记录。</div>
<div class="a" style="left:285px;top:1257px;width:2264px;height:43px;background:#fff;border-top:1px solid #e7eaec"></div>
<div class="a" style="right:22px;top:1270.5px;line-height:30px;font-size:19px;color:#676a6c;white-space:nowrap">© 交易所管理系统</div>
<div class="a" style="left:2496px;top:782px;width:80px;height:52px;border-radius:26px;background:rgba(255,255,255,.6);box-shadow:0 2px 12px rgba(0,0,0,.08)"></div>
<div class="a" style="left:2504px;top:788px;width:41px;height:41px;border-radius:50%;background:#f5b3c6"></div>
<div class="a" style="left:2511px;top:795px"><svg width="26" height="27" viewBox="0 0 26 27"><path d="M2 3 L11 3 L11 9 L2 9 Z M6.5 0.5 L6.5 14" fill="none" stroke="#fff" stroke-width="2"/><path d="M15 2 L19 2 Q21 2 21 4 L21 7" fill="none" stroke="#fff" stroke-width="2"/><path d="M3 16 Q3 22 7 22 L10 22" fill="none" stroke="#fff" stroke-width="2"/><path d="M13 23 L17 10 L19 10 L23.5 23 M14.5 18.5 L21.5 18.5" fill="none" stroke="#fff" stroke-width="2.2"/></svg></div>
</body></html>
